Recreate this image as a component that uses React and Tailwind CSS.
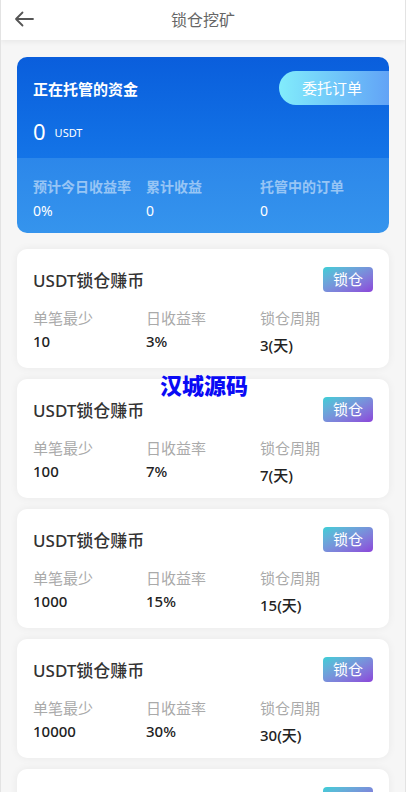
import React from "react";

const items = [
  { min: "10", rate: "3%", days: "3" },
  { min: "100", rate: "7%", days: "7" },
  { min: "1000", rate: "15%", days: "15" },
  { min: "10000", rate: "30%", days: "30" },
  { min: "50000", rate: "40%", days: "60" },
];

function Card({ it }) {
  return (
    <div className="bg-white rounded-[10px] shadow-[0_0_8px_rgba(0,0,0,0.06)] h-[119px] px-4 pt-4 shrink-0">
      <div className="flex items-center justify-between">
        <div className="text-[17px] font-medium text-[#333] leading-[26px] mt-[3px]">USDT锁仓赚币</div>
        <div className="w-[50px] h-[25px] rounded-[4px] bg-gradient-to-br from-[#36cfd6] to-[#8a43da] text-white text-[15px] flex items-center justify-center">
          锁仓
        </div>
      </div>
      <div className="grid grid-cols-[113px_114px_1fr] mt-[14px]">
        <div className="text-[15px] text-[#aaa] leading-[20px]">单笔最少</div>
        <div className="text-[15px] text-[#aaa] leading-[20px]">日收益率</div>
        <div className="text-[15px] text-[#aaa] leading-[20px]">锁仓周期</div>
        <div className="text-[15px] text-[#222] font-medium leading-[20px] mt-[3px]">{it.min}</div>
        <div className="text-[15px] text-[#222] font-medium leading-[20px] mt-[3px]">{it.rate}</div>
        <div className="text-[15px] text-[#222] font-medium leading-[20px] mt-[7px]">{it.days}(天)</div>
      </div>
    </div>
  );
}

export default function App() {
  return (
    <div
      className="relative w-[406px] h-[792px] overflow-hidden bg-[#f6f6f6] border-x border-[#e3e3e3]"
      style={{ fontFamily: '"Noto Sans", "Noto Sans CJK SC", sans-serif' }}
    >
      <div className="relative z-10 h-[40px] bg-white flex items-center justify-center shadow-[0_2px_5px_rgba(0,0,0,0.06)]">
        <svg className="absolute left-[13px] top-[11px]" width="20" height="16" viewBox="0 0 20 16" fill="none">
          <path d="M19 8H2M8.5 1.5L2 8l6.5 6.5" stroke="#555" strokeWidth="1.8" strokeLinecap="round" strokeLinejoin="round" />
        </svg>
        <div className="text-[16px] text-[#666]">锁仓挖矿</div>
      </div>

      <div className="px-4 pt-[17px] flex flex-col gap-[11px]">
        <div className="rounded-[10px] overflow-hidden h-[176px] flex flex-col shrink-0 mb-[5px]">
          <div className="h-[101px] bg-gradient-to-b from-[#0a5edc] to-[#1474e7] relative pl-4 pt-[21px]">
            <div className="text-white text-[15px] font-bold leading-[22px]">正在托管的资金</div>
            <div className="flex items-end mt-[18px] text-white">
              <span className="text-[22px] leading-[26px]">0</span>
              <span className="text-[11px] ml-[9px] mb-[3px]">USDT</span>
            </div>
            <div className="absolute right-0 top-[14px] w-[110px] h-[34px] rounded-l-full bg-gradient-to-r from-[#82ecfb] to-[#62a3f6] flex items-center pl-[23px] text-white text-[15px]">
              委托订单
            </div>
          </div>
          <div className="flex-1 bg-gradient-to-b from-[#2c87ea] to-[#3594ed] pl-4 pt-[19px]">
            <div className="grid grid-cols-[113px_114px_1fr]">
              <div className="text-[14px] font-bold text-white/50 leading-[20px]">预计今日收益率</div>
              <div className="text-[14px] font-bold text-white/50 leading-[20px]">累计收益</div>
              <div className="text-[14px] font-bold text-white/50 leading-[20px]">托管中的订单</div>
              <div className="text-[14px] text-white leading-[20px] mt-[4px]">0%</div>
              <div className="text-[14px] text-white leading-[20px] mt-[4px]">0</div>
              <div className="text-[14px] text-white leading-[20px] mt-[4px]">0</div>
            </div>
          </div>
        </div>

        {items.map((it, i) => (
          <Card key={i} it={it} />
        ))}
      </div>

      <div className="absolute left-[159px] top-[372px] text-[22px] font-black text-[#0a0af5] leading-[26px]">
        汉城源码
      </div>
    </div>
  );
}
